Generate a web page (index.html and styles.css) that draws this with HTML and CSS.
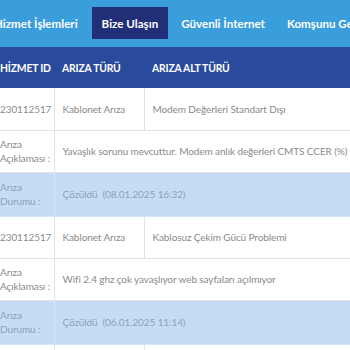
FILE: index.html
```html
<!DOCTYPE html>
<html lang="tr">
<head>
  <meta charset="UTF-8">
  <meta name="viewport" content="width=device-width, initial-scale=1.0">
  <title>Arıza Kayıtlarım</title>
  <link rel="stylesheet" href="styles.css">
</head>
<body>
  <nav class="menu">
    <a class="menu-item" href="#">Hizmet İşlemleri</a>
    <span class="sep"></span>
    <a class="menu-item active" href="#">Bize Ulaşın</a>
    <a class="menu-item" href="#">Güvenli İnternet</a>
    <span class="sep"></span>
    <a class="menu-item" href="#">Komşunu Getir</a>
  </nav>

  <table class="faults">
    <thead>
      <tr>
        <th class="col-id">HİZMET ID</th>
        <th class="col-type">ARIZA TÜRÜ</th>
        <th>ARIZA ALT TÜRÜ</th>
      </tr>
    </thead>
    <tbody>
      <tr>
        <td>230112517</td>
        <td>Kablonet Arıza</td>
        <td>Modem Değerleri Standart Dışı</td>
      </tr>
      <tr>
        <td class="label">Arıza<br>Açıklaması :</td>
        <td colspan="2">Yavaşlık sorunu mevcuttur. Modem anlık değerleri CMTS CCER (%) 3,2</td>
      </tr>
      <tr class="status">
        <td class="label">Arıza<br>Durumu :</td>
        <td colspan="2">Çözüldü &nbsp;(08.01.2025 16:32)</td>
      </tr>
      <tr>
        <td>230112517</td>
        <td>Kablonet Arıza</td>
        <td>Kablosuz Çekim Gücü Problemi</td>
      </tr>
      <tr>
        <td class="label">Arıza<br>Açıklaması :</td>
        <td colspan="2">Wifi 2.4 ghz çok yavaşlıyor web sayfaları açılmıyor</td>
      </tr>
      <tr class="status">
        <td class="label">Arıza<br>Durumu :</td>
        <td colspan="2">Çözüldü &nbsp;(06.01.2025 11:14)</td>
      </tr>
      <tr>
        <td>230112517</td>
        <td>Kablonet Arıza</td>
        <td>Kablosuz Çekim Gücü Problemi</td>
      </tr>
    </tbody>
  </table>
</body>
</html>
```

FILE: styles.css
```css
:root {
  --color-menu: #3a9ddc;
  --color-activo: #202f78;
  --color-cabecera: #2a4a9d;
  --color-estado: #c5dcf5;
  --color-texto: #8a8a8a;
  --color-linea: #e2e2e2;
}

* {
  box-sizing: border-box;
}

body {
  font-family: Lato, 'Open Sans', Arial, sans-serif;
  margin: 0;
  background: white;
  overflow: hidden;
  width: 350px;
  height: 350px;
}

.menu {
  display: flex;
  align-items: center;
  height: 47px;
  background-color: var(--color-menu);
  margin-left: -16px;
  white-space: nowrap;
}

.menu-item {
  display: flex;
  align-items: center;
  height: 32px;
  margin-top: -1px;
  padding: 0 10px;
  color: white;
  font-size: 11.6px;
  font-weight: bold;
  text-decoration: none;
}

.menu-item.active {
  background-color: var(--color-activo);
  margin: -1px 3px 0 2px;
}

.sep {
  width: 1px;
  height: 20px;
  margin: 0 1px;
  background-color: rgba(255, 255, 255, 0.35);
}

.faults {
  border-collapse: collapse;
  margin-left: -8px;
  width: 520px;
  table-layout: fixed;
  font-size: 10px;
  letter-spacing: -0.1px;
  color: var(--color-texto);
}

.faults th {
  height: 41px;
  padding: 0 8px;
  text-align: left;
  background-color: var(--color-cabecera);
  color: white;
  font-size: 10.4px;
  font-weight: bold;
  letter-spacing: -0.2px;
  white-space: nowrap;
}

.col-id {
  width: 62px;
}

.col-type {
  width: 90px;
}

.faults td {
  height: 42px;
  padding: 0 8px;
  border-bottom: 1px solid var(--color-linea);
  border-left: 1px solid var(--color-linea);
  line-height: 14px;
  white-space: nowrap;
}

.faults td:first-child {
  border-left: none;
}

.faults .status td {
  height: 44px;
  background-color: var(--color-estado);
  color: #8fa1b6;
  border-color: #d5e4f6;
}
```
